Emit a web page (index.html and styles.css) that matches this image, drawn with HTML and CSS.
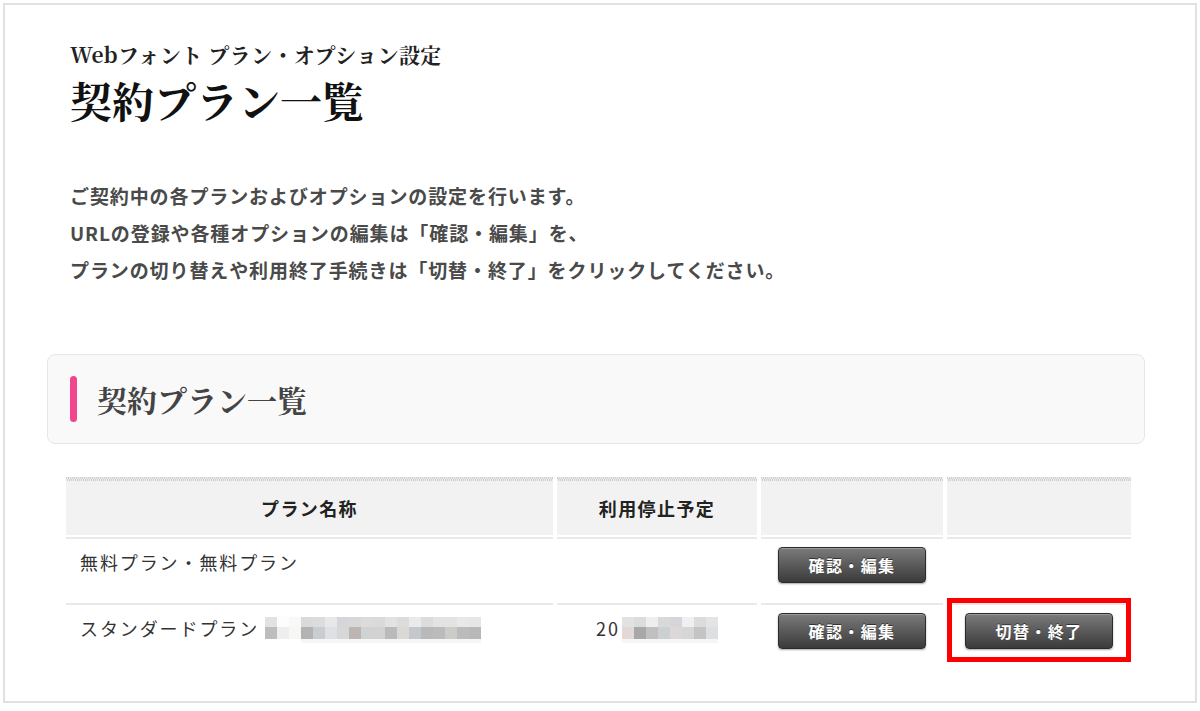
FILE: index.html
```html
<!DOCTYPE html>
<html lang="ja">
<head>
    <meta charset="UTF-8">
    <meta name="viewport" content="width=device-width, initial-scale=1.0">
    <title>契約プラン一覧</title>
    <link rel="stylesheet" href="styles.css">
</head>
<body>
    <div class="frame">
        <!-- Page heading -->
        <header class="page-head">
            <p class="page-sub">Webフォント プラン・オプション設定</p>
            <h1 class="page-title">契約プラン一覧</h1>
        </header>

        <p class="lead">
            ご契約中の各プランおよびオプションの設定を行います。<br>
            URLの登録や各種オプションの編集は「確認・編集」を、<br>
            プランの切り替えや利用終了手続きは「切替・終了」をクリックしてください。
        </p>

        <!-- Plan list -->
        <section class="plans">
            <h2 class="section-title">契約プラン一覧</h2>

            <table class="plan-table">
                <colgroup>
                    <col class="col-name">
                    <col class="col-date">
                    <col class="col-act">
                    <col class="col-act2">
                </colgroup>
                <thead>
                    <tr>
                        <th>プラン名称</th>
                        <th>利用停止予定</th>
                        <th></th>
                        <th></th>
                    </tr>
                </thead>
                <tbody>
                    <tr>
                        <td class="name">無料プラン・無料プラン</td>
                        <td class="date"></td>
                        <td class="act"><a href="#" class="btn">確認・編集</a></td>
                        <td class="act"></td>
                    </tr>
                    <tr>
                        <td class="name">スタンダードプラン<span class="mask mask-name"></span></td>
                        <td class="date">20<span class="mask mask-date"></span></td>
                        <td class="act"><a href="#" class="btn">確認・編集</a></td>
                        <td class="act act-mark">
                            <div class="highlight"><a href="#" class="btn">切替・終了</a></div>
                        </td>
                    </tr>
                </tbody>
            </table>
        </section>
    </div>
</body>
</html>
```

FILE: styles.css
```css
:root {
    --frame-border: #e1e1e1;
    --title-color: #111111;
    --lead-color: #4a4a4a;
    --cell-color: #333333;
    --head-bg: #f2f2f2;
    --row-line: #e9e9e9;
    --box-bg: #f9f9f9;
    --box-border: #e6e6e6;
    --accent: #f0468e;
    --mark: #ff0000;
}

body {
    margin: 0;
    padding: 0;
    background-color: #ffffff;
    font-family: "Noto Sans CJK JP", "Noto Sans", sans-serif;
    color: var(--cell-color);
}

.frame {
    margin: 3px;
    height: 700px;
    border: 2px solid var(--frame-border);
    box-sizing: border-box;
}

/* Page heading */
.page-head {
    padding: 35px 0 0 65px;
}

.page-sub,
.page-title,
.section-title {
    font-family: "Noto Serif CJK JP", "Liberation Serif", "Noto Sans CJK JP", serif;
    font-weight: bold;
}

.page-sub {
    margin: 0;
    font-size: 21px;
    line-height: 28px;
    letter-spacing: 0.4px;
    color: #222222;
}

.page-title {
    margin: 6px 0 0;
    font-size: 42px;
    line-height: 52px;
    color: var(--title-color);
}

.lead {
    margin: 51px 0 0 65px;
    font-size: 19px;
    line-height: 37px;
    letter-spacing: 0.9px;
    font-weight: bold;
    color: var(--lead-color);
}

/* Section box */
.section-title {
    display: flex;
    align-items: center;
    margin: 66px 50px 0 42px;
    height: 90px;
    padding-left: 22px;
    box-sizing: border-box;
    background-color: var(--box-bg);
    border: 1px solid var(--box-border);
    border-radius: 8px;
    font-size: 30px;
    color: #444444;
}

.section-title::before {
    content: "";
    width: 7px;
    height: 46px;
    margin-right: 20px;
    border-radius: 4px;
    background-color: var(--accent);
}

/* Plan table */
.plan-table {
    margin: 33px 0 0 57px;
    width: 1073px;
    table-layout: fixed;
    border-collapse: separate;
    border-spacing: 4px 0;
}

.col-name { width: 487px; }
.col-date { width: 200px; }
.col-act { width: 182px; }
.col-act2 { width: 184px; }

.plan-table th {
    padding: 4px 0 0;
    line-height: 54px;
    font-size: 18px;
    font-weight: bold;
    letter-spacing: 1.4px;
    color: #222222;
    text-align: center;
    background:
        repeating-linear-gradient(90deg, #cfcfcf 0 1px, #ececec 1px 2px) 0 0 / 100% 2px no-repeat,
        repeating-linear-gradient(90deg, #ececec 0 1px, #cfcfcf 1px 2px) 0 2px / 100% 2px no-repeat,
        var(--head-bg);
    border-bottom: 2px solid #ffffff;
}

.plan-table td {
    padding: 8px 0 20px;
    border-top: 2px solid var(--row-line);
    vertical-align: top;
    font-size: 18px;
    line-height: 30px;
    letter-spacing: 1.9px;
    color: var(--cell-color);
}

.plan-table td.name {
    padding-left: 14px;
}

.plan-table td.date {
    text-align: center;
}

.plan-table td.act-mark {
    padding: 0;
}

.btn {
    display: block;
    width: 148px;
    height: 36px;
    margin: 0 auto;
    box-sizing: border-box;
    border: 1px solid #2b2b2b;
    border-radius: 4px;
    background: linear-gradient(#7b7b7b, #5a5a5a 50%, #3b3b3b);
    box-shadow: inset 0 1px 0 rgba(255, 255, 255, 0.25), 0 1px 2px rgba(0, 0, 0, 0.35);
    color: #ffffff;
    font-size: 16px;
    font-weight: bold;
    line-height: 34px;
    letter-spacing: 1.4px;
    text-align: center;
    text-decoration: none;
    text-shadow: 0 -1px 0 rgba(0, 0, 0, 0.5);
}

.highlight {
    margin-top: -7px;
    padding: 10px 13px 8px;
    border: 5px solid var(--mark);
}

/* Pixelated cover over private values */
.mask {
    display: inline-block;
    height: 26px;
    vertical-align: middle;
    margin-top: -3px;
    letter-spacing: 0;
}

.mask-name {
    width: 216px;
    margin-left: 6px;
    background:
        linear-gradient(90deg, #e2e2e2 0 12px, #fdfdfd 12px 24px, #f8f8f6 24px 36px, #dadada 36px 48px, #dcdcdc 48px 60px, #e8e8e8 60px 72px, #d6d6da 72px 84px, #d8d8d8 84px 96px, #dedad8 96px 108px, #d9dbdb 108px 120px, #e2e2e2 120px 132px, #dddcda 132px 144px, #e9eaec 144px 156px, #dcdcdc 156px 168px, #e3e3e3 168px 180px, #e3e3e3 180px 192px, #e8e8e8 192px 204px, #e6e6e6 204px 216px) 0 0 / 100% 10px no-repeat,
        linear-gradient(90deg, #bdbdbd 0 12px, #eeeeee 12px 24px, #f7f7f5 24px 36px, #b3b3b3 36px 48px, #c9ccd0 48px 60px, #dfe0e3 60px 72px, #d7d7d7 72px 84px, #bdb5b1 84px 96px, #cfd3d6 96px 108px, #d2d2d2 108px 120px, #bababa 120px 132px, #dad9d6 132px 144px, #c4c8cd 144px 156px, #b9b9b9 156px 168px, #bbbbbb 168px 180px, #cdcbc8 180px 192px, #bbbbbb 192px 204px, #b8b8b8 204px 216px) 0 10px / 100% 12px no-repeat,
        linear-gradient(90deg, #ffffff 0 36px, #f6f6f6 36px) 0 22px / 100% 4px no-repeat;
}

.mask-date {
    width: 96px;
    margin-left: 2px;
    background:
        linear-gradient(90deg, #e2e2e2 0 12px, #dcdcdc 12px 24px, #eeeeee 24px 36px, #d9d9d9 36px 48px, #d6d6da 48px 60px, #f0f0f0 60px 72px, #dcdcdc 72px 84px, #e4e4e4 84px 96px) 0 0 / 100% 10px no-repeat,
        linear-gradient(90deg, #e2d8d8 0 12px, #a8a8a8 12px 24px, #c0c0c0 24px 36px, #ccd0d2 36px 48px, #dcd8d8 48px 60px, #d6d6d6 60px 72px, #c4c4c4 72px 84px, #dde0e3 84px 96px) 0 10px / 100% 12px no-repeat,
        linear-gradient(#f6f6f6, #f6f6f6) 0 22px / 100% 4px no-repeat;
}
```
